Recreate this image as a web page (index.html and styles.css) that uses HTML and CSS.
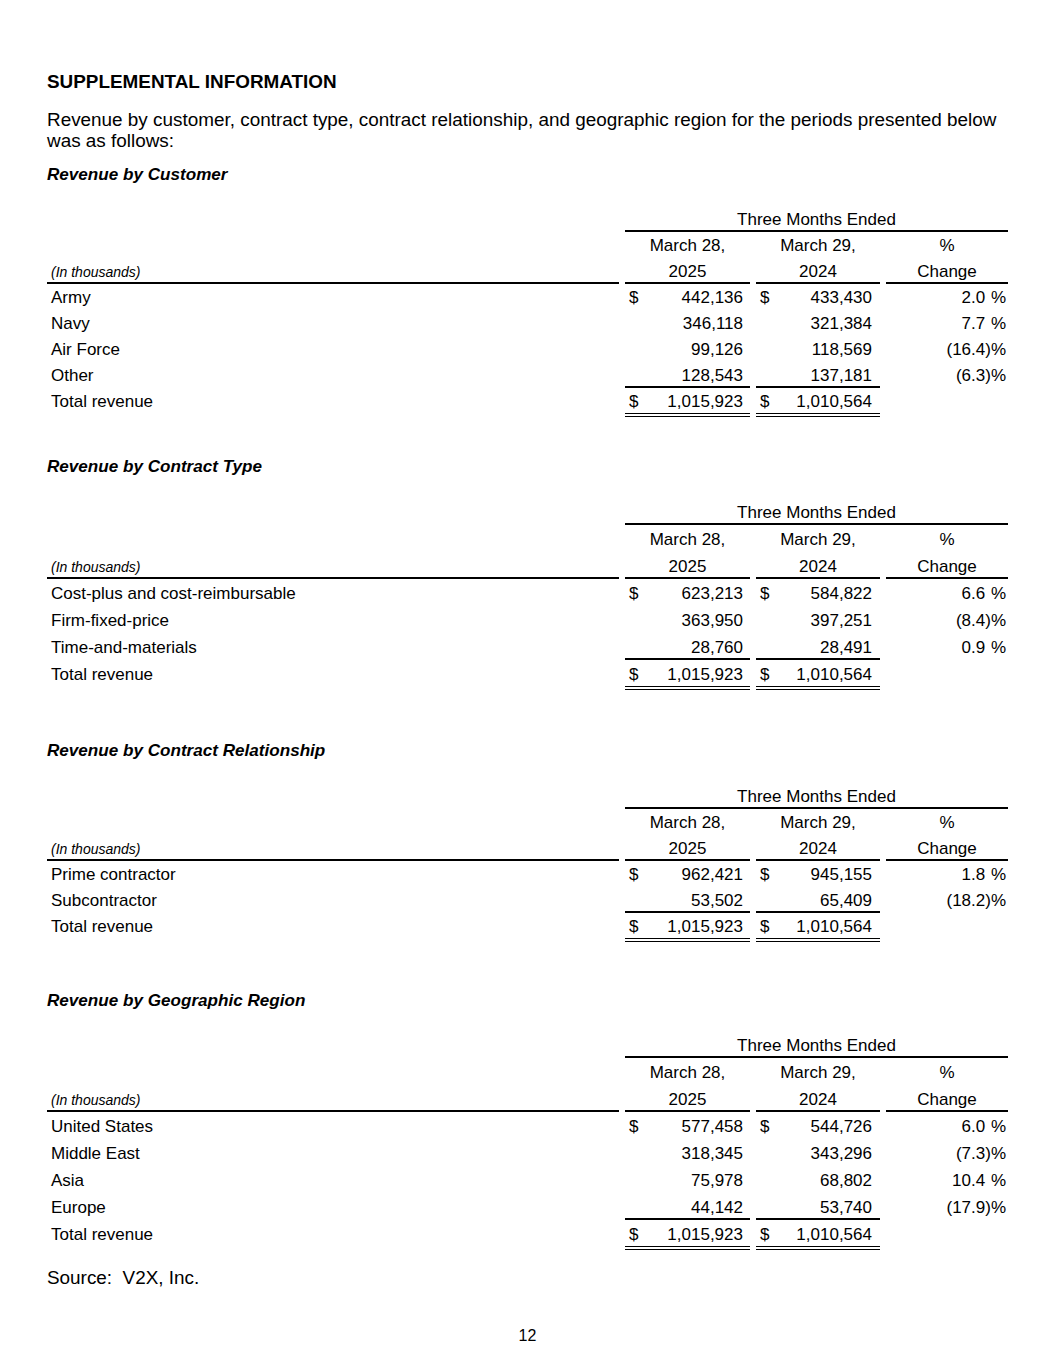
FILE: index.html
```html
<!DOCTYPE html>
<html lang="en">
<head>
<meta charset="utf-8">
<title>Supplemental Information</title>
<link rel="stylesheet" href="styles.css">
</head>
<body>
<main class="page">
  <h1 class="title">SUPPLEMENTAL INFORMATION</h1>
  <p class="intro">Revenue by customer, contract type, contract relationship, and geographic region for the periods presented below was as follows:</p>

  <section class="section sec-cust">
    <h2 class="sec-title">Revenue by Customer</h2>
    <div class="fin">
      <div class="c"></div><div class="c span ul">Three Months Ended</div>
      <div class="c"></div><div class="c ctr">March 28,</div><div class="c ctr">March 29,</div><div class="c ctr">%</div>
      <div class="c unit ul">(In thousands)</div><div class="c ctr ul">2025</div><div class="c ctr ul">2024</div><div class="c ctr ul">Change</div>

      <div class="c lbl">Army</div><div class="c num"><span>$</span><span class="val">442,136</span></div><div class="c num n2"><span>$</span><span class="val">433,430</span></div><div class="c pct">2.0<span class="gap">)</span>%</div>
      <div class="c lbl">Navy</div><div class="c num"><span class="val">346,118</span></div><div class="c num n2"><span class="val">321,384</span></div><div class="c pct">7.7<span class="gap">)</span>%</div>
      <div class="c lbl">Air Force</div><div class="c num"><span class="val">99,126</span></div><div class="c num n2"><span class="val">118,569</span></div><div class="c pct">(16.4)%</div>
      <div class="c lbl">Other</div><div class="c num ul"><span class="val">128,543</span></div><div class="c num n2 ul"><span class="val">137,181</span></div><div class="c pct">(6.3)%</div>
      <div class="c lbl">Total revenue</div><div class="c num tot"><span>$</span><span class="val">1,015,923</span></div><div class="c num n2 tot"><span>$</span><span class="val">1,010,564</span></div><div class="c pct"></div>
    </div>
  </section>

  <section class="section sec-type">
    <h2 class="sec-title">Revenue by Contract Type</h2>
    <div class="fin tall">
      <div class="c"></div><div class="c span ul">Three Months Ended</div>
      <div class="c"></div><div class="c ctr">March 28,</div><div class="c ctr">March 29,</div><div class="c ctr">%</div>
      <div class="c unit ul">(In thousands)</div><div class="c ctr ul">2025</div><div class="c ctr ul">2024</div><div class="c ctr ul">Change</div>

      <div class="c lbl">Cost-plus and cost-reimbursable</div><div class="c num"><span>$</span><span class="val">623,213</span></div><div class="c num n2"><span>$</span><span class="val">584,822</span></div><div class="c pct">6.6<span class="gap">)</span>%</div>
      <div class="c lbl">Firm-fixed-price</div><div class="c num"><span class="val">363,950</span></div><div class="c num n2"><span class="val">397,251</span></div><div class="c pct">(8.4)%</div>
      <div class="c lbl">Time-and-materials</div><div class="c num ul"><span class="val">28,760</span></div><div class="c num n2 ul"><span class="val">28,491</span></div><div class="c pct">0.9<span class="gap">)</span>%</div>
      <div class="c lbl">Total revenue</div><div class="c num tot"><span>$</span><span class="val">1,015,923</span></div><div class="c num n2 tot"><span>$</span><span class="val">1,010,564</span></div><div class="c pct"></div>
    </div>
  </section>

  <section class="section sec-rel">
    <h2 class="sec-title">Revenue by Contract Relationship</h2>
    <div class="fin">
      <div class="c"></div><div class="c span ul">Three Months Ended</div>
      <div class="c"></div><div class="c ctr">March 28,</div><div class="c ctr">March 29,</div><div class="c ctr">%</div>
      <div class="c unit ul">(In thousands)</div><div class="c ctr ul">2025</div><div class="c ctr ul">2024</div><div class="c ctr ul">Change</div>

      <div class="c lbl">Prime contractor</div><div class="c num"><span>$</span><span class="val">962,421</span></div><div class="c num n2"><span>$</span><span class="val">945,155</span></div><div class="c pct">1.8<span class="gap">)</span>%</div>
      <div class="c lbl">Subcontractor</div><div class="c num ul"><span class="val">53,502</span></div><div class="c num n2 ul"><span class="val">65,409</span></div><div class="c pct">(18.2)%</div>
      <div class="c lbl">Total revenue</div><div class="c num tot"><span>$</span><span class="val">1,015,923</span></div><div class="c num n2 tot"><span>$</span><span class="val">1,010,564</span></div><div class="c pct"></div>
    </div>
  </section>

  <section class="section sec-geo">
    <h2 class="sec-title">Revenue by Geographic Region</h2>
    <div class="fin tall">
      <div class="c"></div><div class="c span ul">Three Months Ended</div>
      <div class="c"></div><div class="c ctr">March 28,</div><div class="c ctr">March 29,</div><div class="c ctr">%</div>
      <div class="c unit ul">(In thousands)</div><div class="c ctr ul">2025</div><div class="c ctr ul">2024</div><div class="c ctr ul">Change</div>

      <div class="c lbl">United States</div><div class="c num"><span>$</span><span class="val">577,458</span></div><div class="c num n2"><span>$</span><span class="val">544,726</span></div><div class="c pct">6.0<span class="gap">)</span>%</div>
      <div class="c lbl">Middle East</div><div class="c num"><span class="val">318,345</span></div><div class="c num n2"><span class="val">343,296</span></div><div class="c pct">(7.3)%</div>
      <div class="c lbl">Asia</div><div class="c num"><span class="val">75,978</span></div><div class="c num n2"><span class="val">68,802</span></div><div class="c pct">10.4<span class="gap">)</span>%</div>
      <div class="c lbl">Europe</div><div class="c num ul"><span class="val">44,142</span></div><div class="c num n2 ul"><span class="val">53,740</span></div><div class="c pct">(17.9)%</div>
      <div class="c lbl">Total revenue</div><div class="c num tot"><span>$</span><span class="val">1,015,923</span></div><div class="c num n2 tot"><span>$</span><span class="val">1,010,564</span></div><div class="c pct"></div>
    </div>
  </section>

  <p class="source">Source:&nbsp; V2X, Inc.</p>
  <p class="pageno">12</p>
</main>
</body>
</html>
```

FILE: styles.css
```css
* { box-sizing: border-box; }

html, body {
  margin: 0;
  padding: 0;
  background: #fff;
}

body {
  color: #000;
  font-family: "Liberation Sans", Arial, sans-serif;
}

.page {
  width: 1055px;
  padding: 72px 47px 0;
}

.title {
  margin: 0;
  font-size: 18.9px;
  line-height: 20px;
  font-weight: 700;
}

.intro {
  margin: 18px 0 0;
  font-size: 18.9px;
  line-height: 20.6px;
}

/* section spacing */
.sec-cust { margin-top: 14px; }
.sec-type { margin-top: 40px; }
.sec-rel  { margin-top: 51px; }
.sec-geo  { margin-top: 49px; }

.sec-title {
  margin: 0 0 21px;
  font-size: 17.1px;
  line-height: 20px;
  font-weight: 700;
  font-style: italic;
}

.sec-rel .sec-title { margin-bottom: 22px; }
.sec-geo .sec-title { margin-bottom: 20px; }

.fin {
  display: grid;
  grid-template-columns: 572px 125px 124px 122px;
  column-gap: 6px;
  font-size: 17px;
}

.c {
  padding: 4px 0 0;
  line-height: 20px;
  border-bottom: 2px solid transparent;
  white-space: nowrap;
}

.fin.tall .c {
  padding-top: 5px;
}

.span {
  grid-column: 2 / 5;
  text-align: center;
}

.ctr {
  text-align: center;
}

.ul {
  border-bottom-color: #000;
}

.unit {
  padding-left: 4px;
  font-size: 14px;
  font-style: italic;
}

.lbl {
  padding-left: 4px;
}

.num {
  display: flex;
  padding-left: 4px;
  padding-right: 7px;
}

.num.n2 {
  padding-right: 8px;
}

.num .val {
  margin-left: auto;
}

.tot {
  padding-bottom: 1px;
  border-bottom: 4px double #000;
}

.pct {
  text-align: right;
  padding-right: 2px;
}

.gap {
  visibility: hidden;
}

.source {
  margin: 18px 0 0;
  font-size: 18.9px;
  line-height: 20.6px;
}

.pageno {
  margin: 37px 0 0;
  text-align: center;
  font-size: 16px;
  line-height: 20px;
}
```
